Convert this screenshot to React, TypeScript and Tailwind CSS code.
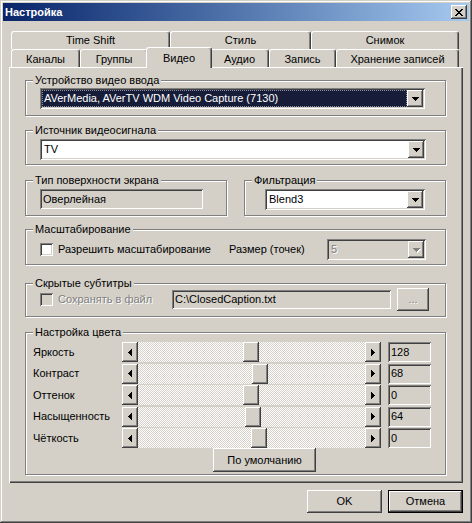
import type { ReactNode } from 'react'

// Win2000 classic bevels
const raised = 'shadow-[inset_-1px_-1px_0_#404040,inset_1px_1px_0_#ffffff,inset_-2px_-2px_0_#808080]'
const sunken = 'shadow-[inset_1px_1px_0_#808080,inset_-1px_-1px_0_#ffffff,inset_2px_2px_0_#404040,inset_-2px_-2px_0_#d4d0c8]'
const disabledText = 'text-[#808080] [text-shadow:1px_1px_0_#ffffff]'

function DownArrow({ disabled }: { disabled?: boolean }) {
  return (
    <svg width="7" height="4" viewBox="0 0 7 4" className={disabled ? 'drop-shadow-[1px_1px_0_#ffffff]' : ''}>
      <path d="M0 0h7v1H0zM1 1h5v1H1zM2 2h3v1H2zM3 3h1v1H3z" fill={disabled ? '#808080' : '#000'} />
    </svg>
  )
}

function SideArrow({ dir }: { dir: 'left' | 'right' }) {
  return (
    <svg width="4" height="7" viewBox="0 0 4 7">
      {dir === 'left' ? (
        <path d="M3 0h1v7H3zM2 1h1v5H2zM1 2h1v3H1zM0 3h1v1H0z" fill="#000" />
      ) : (
        <path d="M0 0h1v7H0zM1 1h1v5H1zM2 2h1v3H2zM3 3h1v1H3z" fill="#000" />
      )}
    </svg>
  )
}

function CloseGlyph() {
  return (
    <svg width="8" height="7" viewBox="0 0 8 7">
      <path
        d="M0 0h2v1H0zM6 0h2v1H6zM1 1h2v1H1zM5 1h2v1H5zM2 2h4v1H2zM3 3h2v1H3zM2 4h4v1H2zM1 5h2v1H1zM5 5h2v1H5zM0 6h2v1H0zM6 6h2v1H6z"
        fill="#000"
      />
    </svg>
  )
}

function GroupBox({ label, className, children }: { label: string; className: string; children?: ReactNode }) {
  return (
    <div className={`relative border border-[#808080] shadow-[inset_1px_1px_0_#ffffff,1px_1px_0_#ffffff] ${className}`}>
      <span className="absolute -top-[7px] left-[7px] bg-[#d4d0c8] px-[2px] leading-[13px] whitespace-nowrap">{label}</span>
      {children}
    </div>
  )
}

function Combo({
  value,
  className,
  selected,
  disabled,
}: {
  value: string
  className: string
  selected?: boolean
  disabled?: boolean
}) {
  return (
    <div className={`flex h-[21px] p-[2px] ${disabled ? 'bg-[#d4d0c8]' : 'bg-white'} ${sunken} ${className}`}>
      <div
        className={`flex flex-1 items-center pl-[2px] whitespace-nowrap ${
          selected ? 'bg-[#171d38] text-white outline outline-1 outline-dotted outline-[#8a90a8] -outline-offset-1' : ''
        } ${disabled ? disabledText : ''}`}
      >
        {value}
      </div>
      <div className={`flex w-[16px] items-center justify-center bg-[#d4d0c8] ${raised}`}>
        <DownArrow disabled={disabled} />
      </div>
    </div>
  )
}

function Checkbox({ disabled }: { disabled?: boolean }) {
  return <div className={`h-[13px] w-[13px] shrink-0 ${disabled ? 'bg-[#d4d0c8]' : 'bg-white'} ${sunken}`} />
}

const colorRows = [
  { label: 'Яркость', offset: 105, value: '128' },
  { label: 'Контраст', offset: 114, value: '68' },
  { label: 'Оттенок', offset: 105, value: '0' },
  { label: 'Насыщенность', offset: 107, value: '64' },
  { label: 'Чёткость', offset: 113, value: '0' },
]

function ColorRow({ label, offset, value }: { label: string; offset: number; value: string }) {
  return (
    <div className="flex h-[20px] items-center">
      <div className="w-[89px] whitespace-nowrap">{label}</div>
      <div className="flex h-[20px] w-[259px]">
        <div className={`flex w-[16px] items-center justify-center bg-[#d4d0c8] ${raised}`}>
          <SideArrow dir="left" />
        </div>
        <div className="flex flex-1 bg-[image:repeating-conic-gradient(#ffffff_0%_25%,#d4d0c8_0%_50%)] bg-[length:2px_2px]">
          <div className={`h-[20px] w-[16px] bg-[#d4d0c8] ${raised}`} style={{ marginLeft: offset }} />
        </div>
        <div className={`flex w-[16px] items-center justify-center bg-[#d4d0c8] ${raised}`}>
          <SideArrow dir="right" />
        </div>
      </div>
      <div className={`ml-[7px] flex h-[20px] w-[43px] items-center bg-[#d4d0c8] pl-[3px] ${sunken}`}>{value}</div>
    </div>
  )
}

const backTabs = [
  { label: 'Time Shift', w: 'w-[159px]' },
  { label: 'Стиль', w: 'w-[141px]' },
  { label: 'Снимок', w: 'w-[148px]' },
]

const frontTabs = [
  { label: 'Каналы', w: 'w-[69px]' },
  { label: 'Группы', w: 'w-[68px]' },
  { label: 'Видео', w: 'w-[66px]', active: true },
  { label: 'Аудио', w: 'w-[59px]' },
  { label: 'Запись', w: 'w-[67px]' },
  { label: 'Хранение записей', w: 'w-[123px]' },
]

const tabEdge =
  'rounded-t-[3px] border-l border-t border-r border-l-white border-t-white border-r-[#404040] bg-[#d4d0c8] shadow-[inset_-1px_0_0_#808080]'

export default function App() {
  return (
    <div
      className={`flex h-[523px] w-[472px] flex-col bg-[#d4d0c8] p-[3px] font-['Liberation_Sans',Arial,sans-serif] text-[11px] leading-[13px] text-black shadow-[inset_-1px_-1px_0_#404040,inset_1px_1px_0_#d4d0c8,inset_-2px_-2px_0_#808080,inset_2px_2px_0_#ffffff]`}
    >
      {/* title bar */}
      <div className="flex h-[18px] items-center bg-linear-to-r from-[#0a246a] to-[#a6caf0] pl-[2px] pr-[2px]">
        <span className="font-bold text-white">Настройка</span>
        <div className={`ml-auto flex h-[14px] w-[16px] items-center justify-center bg-[#d4d0c8] ${raised}`}>
          <CloseGlyph />
        </div>
      </div>

      <div className="mx-[6px] mt-[10px] flex flex-col">
        {/* back tab row */}
        <div className="ml-[2px] flex h-[18px]">
          {backTabs.map((t) => (
            <div key={t.label} className={`flex h-[18px] items-center justify-center ${t.w} ${tabEdge}`}>
              {t.label}
            </div>
          ))}
        </div>
        {/* front tab row */}
        <div className="ml-[2px] flex h-[18px] items-start">
          {frontTabs.map((t) =>
            t.active ? (
              <div
                key={t.label}
                className={`relative z-10 -mx-[2px] -mb-[1px] -mt-[2px] flex h-[21px] items-start justify-center pt-[4px] ${t.w} ${tabEdge}`}
              >
                {t.label}
              </div>
            ) : (
              <div key={t.label} className={`flex h-[18px] items-center justify-center pt-[1px] ${t.w} ${tabEdge}`}>
                {t.label}
              </div>
            ),
          )}
        </div>

        {/* tab panel */}
        <div
          className="flex h-[416px] flex-col bg-[#d4d0c8] pl-[16px] pr-[17px] shadow-[inset_1px_1px_0_#ffffff,inset_-1px_-1px_0_#404040,inset_-2px_-2px_0_#808080]"
        >
          <GroupBox label="Устройство видео ввода" className="mt-[13px] h-[36px] pl-[14px] pr-[20px] pt-[7px]">
            <Combo value="AVerMedia, AVerTV WDM Video Capture (7130)" className="w-full" selected />
          </GroupBox>

          <GroupBox label="Источник видеосигнала" className="mt-[14px] h-[35px] pl-[14px] pr-[19px] pt-[8px]">
            <Combo value="TV" className="w-full" />
          </GroupBox>

          <div className="mt-[15px] flex gap-[17px]">
            <GroupBox label="Тип поверхности экрана" className="h-[36px] w-[202px] pl-[14px] pt-[8px]">
              <div className={`flex h-[20px] w-[163px] items-center bg-[#d4d0c8] pl-[3px] ${sunken}`}>Оверлейная</div>
            </GroupBox>
            <GroupBox label="Фильтрация" className="h-[36px] w-[202px] pl-[20px] pr-[20px] pt-[8px]">
              <Combo value="Blend3" className="w-full" />
            </GroupBox>
          </div>

          <GroupBox label="Масштабирование" className="mt-[13px] h-[36px] pl-[14px] pt-[9px]">
            <div className="flex h-[21px] items-center">
              <div className="flex w-[189px] items-center">
                <Checkbox />
                <span className="ml-[5px] whitespace-nowrap">Разрешить масштабирование</span>
              </div>
              <span className="w-[98px] whitespace-nowrap">Размер (точек)</span>
              <Combo value="5" className="w-[99px]" disabled />
            </div>
          </GroupBox>

          <GroupBox label="Скрытые субтитры" className="mt-[18px] h-[34px] pl-[14px] pt-[4px]">
            <div className="flex h-[23px] items-center">
              <div className="flex w-[132px] items-center">
                <Checkbox disabled />
                <span className={`ml-[5px] whitespace-nowrap ${disabledText}`}>Сохранять в файл</span>
              </div>
              <div className={`flex h-[19px] w-[219px] items-center bg-[#d4d0c8] pl-[3px] ${sunken}`}>
                C:\ClosedCaption.txt
              </div>
              <div className={`ml-[6px] flex h-[23px] w-[32px] items-center justify-center bg-[#d4d0c8] ${raised} ${disabledText}`}>
                ...
              </div>
            </div>
          </GroupBox>

          <GroupBox label="Настройка цвета" className="mt-[15px] h-[143px] pl-[7px] pt-[9px]">
            <div className="flex flex-col gap-[1.5px]">
              {colorRows.map((r) => (
                <ColorRow key={r.label} {...r} />
              ))}
            </div>
            <div className={`ml-[180px] flex h-[24px] w-[103px] items-center justify-center bg-[#d4d0c8] ${raised}`}>
              По умолчанию
            </div>
          </GroupBox>
        </div>

        {/* dialog buttons */}
        <div className="mt-[7px] flex justify-end gap-[6px]">
          <div className={`flex h-[23px] w-[75px] items-center justify-center bg-[#d4d0c8] ${raised}`}>OK</div>
          <div className="h-[23px] w-[75px] border border-black">
            <div className={`flex h-full w-full items-center justify-center bg-[#d4d0c8] ${raised}`}>Отмена</div>
          </div>
        </div>
      </div>
    </div>
  )
}
